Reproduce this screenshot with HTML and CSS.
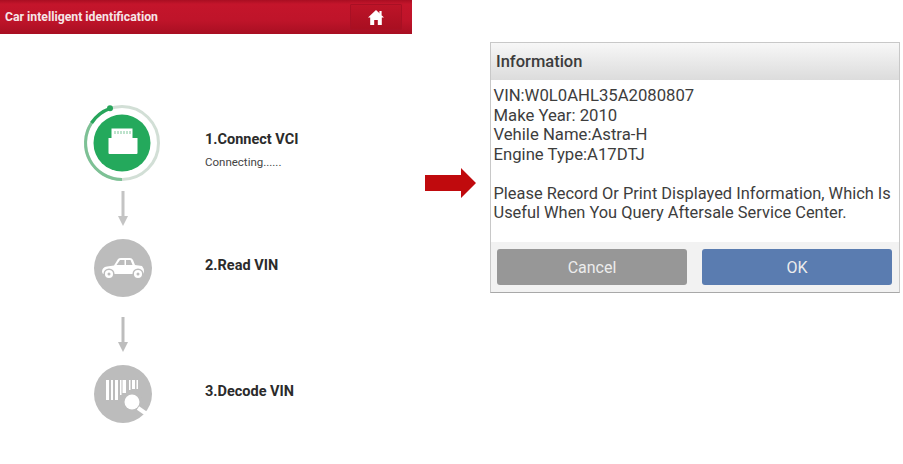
FILE: index.html
```html
<!DOCTYPE html>
<html lang="en">
<head>
<meta charset="utf-8">
<title>Car intelligent identification</title>
<link rel="stylesheet" href="styles.css">
</head>
<body>
<div class="page">
  <section class="app">
    <header class="app-bar">
      <span class="app-title">Car intelligent identification</span>
      <button class="home-btn" aria-label="Home">
        <svg width="16" height="15" viewBox="0 0 16 15"><path fill="#fff" d="M8 0 L16 7.6 H13.8 V15 H9.8 V10 H6.2 V15 H2.2 V7.6 H0 Z"/><rect x="11.4" y="1" width="2.2" height="4" fill="#fff"/></svg>
      </button>
    </header>
    <div class="steps">
      <div class="step step-first">
        <div class="step-icon">
          <svg width="78" height="78" viewBox="0 0 78 78">
            <circle cx="39" cy="39" r="36.500" fill="none" stroke="#d2dfd6" stroke-width="3"/>
            <path d="M39 75.500 A36.500 36.500 0 0 1 8.500 19" fill="none" stroke="#7dc195" stroke-width="3"/>
            <path d="M8.500 19 A36.500 36.500 0 0 1 27 4.500" fill="none" stroke="#27a55b" stroke-width="3.400"/>
            <circle cx="27" cy="4.200" r="3" fill="#27a55b"/>
            <circle cx="39" cy="39" r="28.500" fill="#24a95c"/>
            <path fill="#fff" d="M28.500 24.500 H49.500 V34 H54.500 V49 Q54.500 50 53.500 50 H26.500 Q25.500 50 25.500 49 V34 H28.500 Z"/>
            <path stroke="#7cc79a" stroke-width="1" d="M32 27 V30 M35 27 V30 M38 27 V30 M41 27 V30 M44 27 V30 M47 27 V30"/>
          </svg>
        </div>
        <div class="step-text">
          <div class="step-name">1.Connect VCI</div>
          <div class="step-status">Connecting......</div>
        </div>
      </div>
      <div class="connector connector-first">
        <svg width="10" height="35" viewBox="0 0 10 35"><rect x="3.500" width="3" height="26" fill="#c4c4c4"/><path d="M0 25 H10 L5 35 Z" fill="#c4c4c4"/></svg>
      </div>
      <div class="step">
        <div class="step-icon">
          <svg width="58" height="58" viewBox="0 0 58 58">
            <circle cx="29" cy="29" r="29" fill="#bcbcbc"/>
            <path fill="#fff" d="M8 33 Q8 28 13 27.500 L20 26.500 L24 20 Q25 19 27 19 H36 Q38 19 39 21 L41 26 L48 27 Q50 29 50 33 L49 35 H9 Z"/>
            <path fill="#bcbcbc" d="M26 21 H30.500 V26 H22.500 Z M32 21 H36.500 L38.500 26 H32 Z"/>
            <circle cx="15" cy="35" r="4.800" fill="#fff" stroke="#bcbcbc" stroke-width="1.500"/>
            <circle cx="15" cy="35" r="1.500" fill="#bcbcbc"/>
            <circle cx="44" cy="35" r="4.800" fill="#fff" stroke="#bcbcbc" stroke-width="1.500"/>
            <circle cx="44" cy="35" r="1.500" fill="#bcbcbc"/>
          </svg>
        </div>
        <div class="step-text"><div class="step-name">2.Read VIN</div></div>
      </div>
      <div class="connector">
        <svg width="10" height="35" viewBox="0 0 10 35"><rect x="3.500" width="3" height="26" fill="#bdbdbd"/><path d="M0 25 H10 L5 35 Z" fill="#bdbdbd"/></svg>
      </div>
      <div class="step">
        <div class="step-icon">
          <svg width="58" height="58" viewBox="0 0 58 58">
            <circle cx="29" cy="29" r="29" fill="#bcbcbc"/>
            <path fill="#fff" d="M12 15 H15 V35 H12 Z M17 15 H19 V35 H17 Z M21 15 H24 V35 H21 Z M26 15 H27.500 V30 H26 Z M28.500 15 H32 V28 H28.500 Z M35 15 H36.500 V25 H35 Z M38 15 H41 V24 H38 Z M42.500 15 H44 V24 H42.500 Z"/>
            <circle cx="38" cy="37" r="10.500" fill="#bcbcbc"/>
            <circle cx="38" cy="37" r="7.500" fill="#fff"/>
            <path stroke="#fff" stroke-width="4" d="M44 43 L54 50"/>
          </svg>
        </div>
        <div class="step-text"><div class="step-name">3.Decode VIN</div></div>
      </div>
    </div>
  </section>
  <div class="flow-arrow">
    <svg width="51" height="30" viewBox="0 0 51 30"><path fill="#c00a0d" d="M0 7 H36 V0 L51 15 L36 30 V23 H0 Z"/></svg>
  </div>
  <section class="dialog">
    <h2 class="dialog-title">Information</h2>
    <div class="dialog-body">
      <p class="dialog-para dialog-data">VIN:W0L0AHL35A2080807<br>Make Year: 2010<br>Vehile Name:Astra-H<br>Engine Type:A17DTJ</p>
      <p class="dialog-para">Please Record Or Print Displayed Information, Which Is Useful When You Query Aftersale Service Center.</p>
    </div>
    <div class="dialog-actions">
      <button class="btn btn-cancel">Cancel</button>
      <button class="btn btn-ok">OK</button>
    </div>
  </section>
</div>
</body>
</html>
```
FILE: styles.css
```css
* { box-sizing: border-box; }
html, body { margin: 0; padding: 0; background: #fff; }
.page { display: flex; align-items: flex-start; width: 903px; height: 464px; overflow: hidden; }

.app { width: 412px; flex: none; }
.app-bar {
  height: 34px; display: flex; align-items: center; justify-content: space-between;
  padding: 0 10px 0 5px;
  background: linear-gradient(#a90e22 0, #c4152b 12%, #bf142a 60%, #a80f22 100%);
}
.app-title { font: bold 12.250px Roboto, sans-serif; color: #f6e6e8; margin-top: -1px; }
.home-btn {
  width: 52px; height: 26px; padding: 0; display: flex; align-items: center; justify-content: center;
  background: linear-gradient(#bd1428, #a90f21); border: 1px solid #a81024; border-radius: 1px;
}
.steps { padding: 70px 0 0 82px; }
.step { display: flex; align-items: center; height: 58px; }
.step-first { height: 78px; }
.step-icon { width: 81px; flex: none; display: flex; justify-content: center; }
.step-text { margin-left: 42px; margin-top: -4px; font-family: Roboto, sans-serif; }
.step-name { font-size: 14.500px; font-weight: bold; color: #2b2b2b; line-height: 18px; }
.step-status { font-size: 11.500px; color: #444; line-height: 14px; margin-top: 6px; }
.step-first .step-icon { width: 80px; }
.step-first .step-text { margin-top: 14px; margin-left: 43px; }
.connector { width: 81px; height: 35px; margin: 20px 0 13px; display: flex; justify-content: center; }
.connector-first { margin-top: 9px; }

.flow-arrow { margin: 168px 0 0 13px; width: 65px; flex: none; line-height: 0; }
.dialog {
  width: 410px; height: 251px; margin-top: 42px; flex: none; display: flex; flex-direction: column;
  border: 1px solid #c8c8c8; border-bottom-color: #a8a8a8; font-family: Roboto, sans-serif;
}
.dialog-title {
  margin: 0; height: 37px; padding: 0 5px; display: flex; align-items: center;
  font-size: 16.500px; font-weight: 500; color: #3c3c3c;
  background: linear-gradient(#f7f7f7, #dcdcdc);
}
.dialog-body { flex: 1; padding: 6px 2px 0 2.500px; font-size: 16.400px; line-height: 19.500px; color: #3d3d3d; }
.dialog-para { margin: 0 0 19.500px; }
.dialog-data { font-size: 16.700px; }
.dialog-actions { display: flex; gap: 15px; height: 50px; padding: 7px 7px 7px 6px; background: #f2f2f2; }
.btn {
  flex: 1; border: 0; border-radius: 3px; font: 16px Roboto, sans-serif; color: #ececec;
}
.btn-cancel { background: #979797; }
.btn-ok { background: #5a7cb0; }
```
